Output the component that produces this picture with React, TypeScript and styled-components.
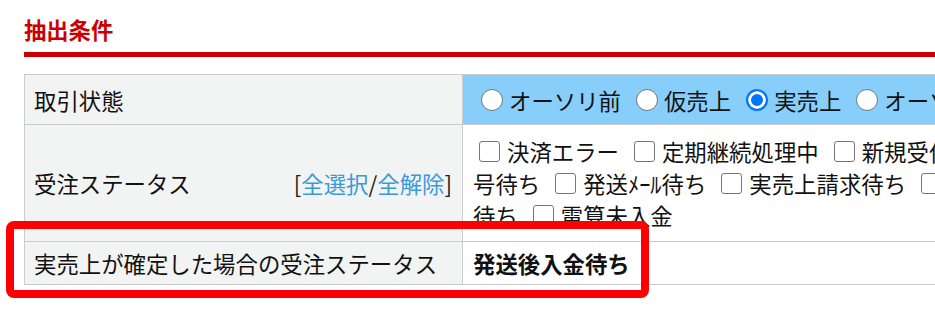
import React from "react";
import styled, { createGlobalStyle } from "styled-components";

const Global = createGlobalStyle`
  html, body {
    margin: 0;
    padding: 0;
    background: #ffffff;
    overflow: hidden;
  }
  body {
    font-family: "Noto Sans CJK JP", "Noto Sans", sans-serif;
    color: #111;
  }
`;

const Page = styled.div`
  position: relative;
  width: 935px;
  height: 317px;
  overflow: hidden;
  padding: 13px 0 0 24px;
  box-sizing: border-box;
`;

const Heading = styled.h2`
  margin: 0;
  width: 1200px;
  font-size: 22.3px;
  line-height: 32px;
  font-weight: 700;
  color: #cc0000;
  padding-bottom: 7px;
  border-bottom: 5px solid #cc0000;
`;

const Table = styled.div`
  margin-top: 17px;
  width: 1200px;
  display: grid;
  grid-template-columns: 438px 1fr;
  grid-template-rows: 50px 117px 43px;
  border-top: 1px solid #cccccc;
  border-left: 1px solid #cccccc;
  font-size: 22.4px;
`;

const LabelCell = styled.div`
  box-sizing: border-box;
  background: #f2f3f3;
  border-right: 1px solid #cccccc;
  border-bottom: 1px solid #cccccc;
  padding: 0 10px 0 9px;
  display: flex;
  align-items: center;
  justify-content: space-between;
  line-height: 32px;
  white-space: nowrap;
`;

const ValueCell = styled.div<{ $tint?: boolean }>`
  box-sizing: border-box;
  background: ${(p) => (p.$tint ? "#87cefa" : "#ffffff")};
  border-right: 1px solid #cccccc;
  border-bottom: 1px solid #cccccc;
  padding: 0 10px;
  display: flex;
  flex-direction: column;
  justify-content: center;
  line-height: 32px;
`;

const Line = styled.div`
  display: flex;
  align-items: center;
  white-space: nowrap;
  height: 32px;
`;

const Option = styled.label`
  display: inline-flex;
  align-items: center;
  margin-right: 7px;
`;

const Radio = styled.span<{ $checked?: boolean }>`
  display: inline-block;
  box-sizing: border-box;
  width: 22px;
  height: 22px;
  border-radius: 50%;
  margin: 0 6px 0 8px;
  background: ${(p) => (p.$checked ? "#0075ff" : "#ffffff")};
  border: ${(p) => (p.$checked ? "2px solid #0075ff" : "1.5px solid #767676")};
  box-shadow: ${(p) => (p.$checked ? "inset 0 0 0 3px #ffffff" : "none")};
`;

const Check = styled.span`
  display: inline-block;
  box-sizing: border-box;
  width: 21px;
  height: 21px;
  border-radius: 3px;
  border: 1.5px solid #767676;
  background: #ffffff;
  margin: 0 7px 0 6px;
`;

const Text = styled.span`
  margin-right: 9px;
`;

const Links = styled.span`
  color: #222;
`;

const Link = styled.a`
  color: #3a9ad9;
  text-decoration: none;
`;

const Strong = styled.span`
  font-weight: 700;
  color: #111;
`;

const Highlight = styled.div`
  position: absolute;
  left: 6px;
  top: 221px;
  width: 643px;
  height: 77px;
  box-sizing: border-box;
  border: 8px solid #ff0000;
  border-radius: 8px;
  pointer-events: none;
`;

const radios = [
  { label: "オーソリ前", checked: false },
  { label: "仮売上", checked: false },
  { label: "実売上", checked: true },
  { label: "オーソリ取消", checked: false },
];

const lines: { lead?: string; items: string[] }[] = [
  { items: ["決済エラー", "定期継続処理中", "新規受付待ち", "伝票番"] },
  { lead: "号待ち", items: ["発送ﾒｰﾙ待ち", "実売上請求待ち", "入金"] },
  { lead: "待ち", items: ["電算未入金"] },
];

export default function App() {
  return (
    <>
      <Global />
      <Page>
        <Heading>抽出条件</Heading>
        <Table>
          <LabelCell>取引状態</LabelCell>
          <ValueCell $tint>
            <Line>
              {radios.map((r) => (
                <Option key={r.label}>
                  <Radio $checked={r.checked} />
                  {r.label}
                </Option>
              ))}
            </Line>
          </ValueCell>

          <LabelCell>
            <span>受注ステータス</span>
            <Links>
              [<Link href="#">全選択</Link>/<Link href="#">全解除</Link>]
            </Links>
          </LabelCell>
          <ValueCell>
            {lines.map((l, i) => (
              <Line key={i}>
                {l.lead && <Text>{l.lead}</Text>}
                {l.items.map((it) => (
                  <React.Fragment key={it}>
                    <Check />
                    <Text>{it}</Text>
                  </React.Fragment>
                ))}
              </Line>
            ))}
          </ValueCell>

          <LabelCell>実売上が確定した場合の受注ステータス</LabelCell>
          <ValueCell>
            <Strong>発送後入金待ち</Strong>
          </ValueCell>
        </Table>
        <Highlight />
      </Page>
    </>
  );
}
